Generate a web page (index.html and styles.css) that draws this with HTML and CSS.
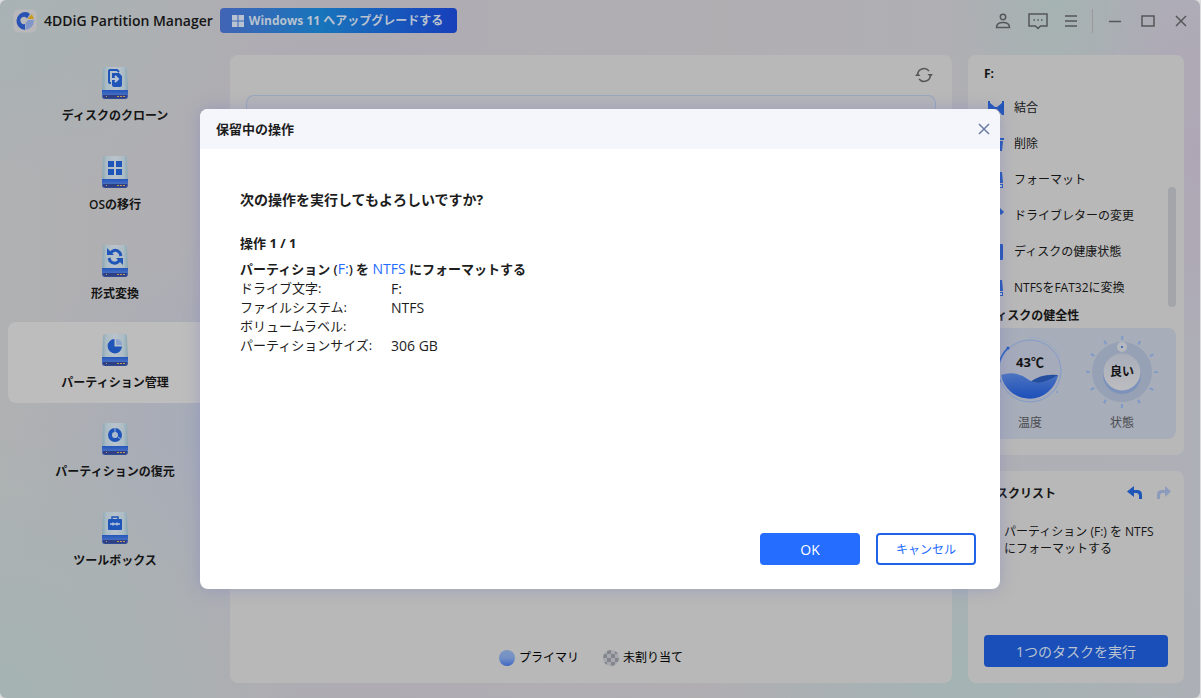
FILE: index.html
```html
<!DOCTYPE html>
<html lang="ja">
<head>
<meta charset="utf-8">
<meta name="viewport" content="width=device-width, initial-scale=1">
<title>4DDiG Partition Manager</title>
<link rel="stylesheet" href="styles.css">
</head>
<body>
<svg class="defs" aria-hidden="true">
  <defs>
    <linearGradient id="case" x1="0" x2="1" y1="0" y2="0">
      <stop offset="0" stop-color="#86a5b3"/><stop offset=".16" stop-color="#abbcc5"/><stop offset=".5" stop-color="#bac3cb"/><stop offset=".84" stop-color="#abbcc5"/><stop offset="1" stop-color="#86a5b3"/>
    </linearGradient>
    <linearGradient id="base" x1="0" x2="0" y1="0" y2="1">
      <stop offset="0" stop-color="#2456bc"/><stop offset=".5" stop-color="#426cc0"/><stop offset="1" stop-color="#2d4690"/>
    </linearGradient>
    <linearGradient id="water" x1="0" x2="0" y1="0" y2="1">
      <stop offset="0" stop-color="#4c74c0"/><stop offset="1" stop-color="#1c4fba"/>
    </linearGradient>
    <linearGradient id="knob" x1="0" x2="0" y1="0" y2="1">
      <stop offset="0" stop-color="#a8adb9"/><stop offset="1" stop-color="#bcbdc0"/>
    </linearGradient>
    <linearGradient id="dot" x1="0" x2="0" y1="0" y2="1">
      <stop offset="0" stop-color="#7e97c4"/><stop offset=".5" stop-color="#7390c5"/><stop offset="1" stop-color="#3f67c2"/>
    </linearGradient>
    <pattern id="checks" width="8" height="8" patternUnits="userSpaceOnUse">
      <path fill="#a7a9af" d="M0 0h8v8H0z"/><path fill="#84868d" d="M4 0h4v4H4zM0 4h4v4H0z"/>
    </pattern>
    <symbol id="drive" viewBox="0 0 26 34">
      <path fill="url(#case)" d="M3 1h20q2 0 2 3l1 22H0L1 4q0-3 2-3z"/>
      <path fill="url(#base)" d="M0 24h26v6q0 3-3 3H3q-3 0-3-3z"/>
      <path fill="#2e3f83" d="M1 29h24v1q0 2-2 2H3q-2 0-2-2z"/>
      <path fill="#c29a5c" d="M4 30h1v1H4zM15 30h2v1h-2zM18 30h2v1h-2zM21 30h2v1h-2z"/>
    </symbol>
  </defs>
</svg>
<div class="window">
  <header class="titlebar">
    <svg class="logo" viewBox="0 0 24 24" aria-hidden="true">
      <rect x=".5" y=".5" width="23" height="23" rx="5" fill="#b9b9bb"/>
      <path fill="#2853b4" d="M13 3a9 9 0 1 0-1 18v-6a3.600 3.600 0 1 1 2-5.500L17 5Q15 3 13 3z"/>
      <path fill="#8296c9" d="M12.500 21v-7L15 11h6q0 8-8.500 10z"/>
      <path fill="#c79a25" d="M15 9l4-4 2 5h-6z"/>
    </svg>
    <h1 class="app-name">4DDiG Partition Manager</h1>
    <button class="upgrade" type="button">
      <svg width="12" height="12" viewBox="0 0 12 12" aria-hidden="true"><path fill="#b8c2d0" d="M0 0h5.500v5.500H0zM6.500 0H12v5.500H6.500zM0 6.500h5.500V12H0zM6.500 6.500H12V12H6.500z"/></svg>
      Windows 11 へアップグレードする
    </button>
    <nav class="tools" aria-label="ウィンドウ">
      <button type="button" aria-label="アカウント"><svg width="16" height="16" viewBox="0 0 16 16"><circle cx="8" cy="4" r="2.700"/><path d="M1.500 14.500q0-5 6.500-5t6.500 5z"/></svg></button>
      <button type="button" aria-label="フィードバック"><svg width="20" height="18" viewBox="0 0 20 18"><path d="M1 2h18v12h-6.500L10 16.500 7.500 14H1zM5.500 8h1.500M9.300 8h1.500M13 8h1.500"/></svg></button>
      <button type="button" aria-label="メニュー"><svg width="14" height="14" viewBox="0 0 14 14"><path d="M1 2h12M1 7h12M1 12h12"/></svg></button>
      <span class="divider"></span>
      <button type="button" aria-label="最小化"><svg width="12" height="12" viewBox="0 0 12 12"><path d="M0 6.500h12"/></svg></button>
      <button type="button" aria-label="最大化"><svg width="14" height="12" viewBox="0 0 14 12"><path d="M1 1h12v10H1z"/></svg></button>
      <button type="button" aria-label="閉じる"><svg width="12" height="12" viewBox="0 0 12 12"><path d="M1 1l10 10M11 1L1 11"/></svg></button>
    </nav>
  </header>

  <div class="layout">
    <nav class="sidebar" aria-label="機能">
      <button class="side-item" type="button">
        <svg class="drive" viewBox="0 0 26 34" aria-hidden="true"><use href="#drive"/><path fill="none" stroke="#1f54b9" stroke-width="2" d="M9 17H8q-1 0-1-1V5q0-1 1-1h7l2 2"/><path fill="#1f54b9" d="M10 7h7l3 3v9q0 2-2 2h-6q-2 0-2-2z"/><path fill="none" stroke="#b9c5d5" stroke-width="2" d="M9 13h7M13 10l3 3-3 3"/></svg>
        ディスクのクローン
      </button>
      <button class="side-item" type="button">
        <svg class="drive" viewBox="0 0 26 34" aria-hidden="true"><use href="#drive"/><path fill="#1f54b9" d="M6 6h6v6H6zM14 6h6v6h-6zM6 14h6v6H6zM14 14h6v6h-6z"/></svg>
        OSの移行
      </button>
      <button class="side-item" type="button">
        <svg class="drive" viewBox="0 0 26 34" aria-hidden="true"><use href="#drive"/><path fill="none" stroke="#1f54b9" stroke-width="3" d="M8 10q5-7 10-1l1 3M18 16q-5 6-10 1l-1-3"/><path fill="#1f54b9" d="M5 4v7h7zM21 21v-7h-7z"/></svg>
        形式変換
      </button>
      <button class="side-item active" type="button" aria-current="page">
        <svg class="drive" viewBox="0 0 26 34" aria-hidden="true"><use href="#drive"/><path fill="#1f54b9" d="M12.500 6v7.500h7.500A7.200 7.200 0 1 1 12.500 6z"/><path fill="#8ba4d0" d="M14 6q6 0 6 6h-6z"/></svg>
        パーティション管理
      </button>
      <button class="side-item" type="button">
        <svg class="drive" viewBox="0 0 26 34" aria-hidden="true"><use href="#drive"/><circle cx="13" cy="13" r="5" fill="none" stroke="#1f54b9" stroke-width="4"/><path stroke="#9cb4d6" d="M13 6v4M16 15l4 3M10 13h6M13 10v6"/></svg>
        パーティションの復元
      </button>
      <button class="side-item" type="button">
        <svg class="drive" viewBox="0 0 26 34" aria-hidden="true"><use href="#drive"/><rect x="6" y="8" width="14" height="11" rx="1" fill="#1f54b9"/><path fill="none" stroke="#1f54b9" stroke-width="1.500" d="M10 8V6h6v2"/><path stroke="#b3c3da" stroke-width="1.500" d="M8 13h10M11 11.500v3M15 11.500v3"/></svg>
        ツールボックス
      </button>
    </nav>

    <main class="panel disks">
      <div class="disk-bar">
        <button type="button" class="refresh" aria-label="更新"><svg width="18" height="16" viewBox="0 0 18 16"><path d="M2.500 8A6.500 6.500 0 0 1 14 4M15.500 8A6.500 6.500 0 0 1 4 12"/><path class="solid" d="M0 9h5.500L2.700 6zM12.500 7H18l-2.700 3z"/></svg></button>
      </div>
      <div class="disk-card"></div>
      <div class="legend">
        <span class="key"><svg width="16" height="16" viewBox="0 0 16 16" aria-hidden="true"><circle cx="8" cy="8" r="8" fill="url(#dot)"/></svg>プライマリ</span>
        <span class="key"><svg width="16" height="16" viewBox="0 0 16 16" aria-hidden="true"><circle cx="8" cy="8" r="8" fill="url(#checks)"/></svg>未割り当て</span>
      </div>
    </main>

    <aside class="right">
      <section class="panel volume">
        <h2 class="volume-name">F:</h2>
        <div class="actions">
          <button type="button"><svg viewBox="0 0 16 16" aria-hidden="true"><path d="M0 1h2v2l5 4h2l5-4V1h2v14h-2L9 9H7l-5 6H0z"/></svg>結合</button>
          <button type="button"><svg viewBox="0 0 16 16" aria-hidden="true"><path d="M0 2h16v2H0zM2 5h13l-1 10H3z"/></svg>削除</button>
          <button type="button"><svg viewBox="0 0 16 16" aria-hidden="true"><path d="M2 0h12l1 11H1zM0 12h15v4H0z"/><path class="cut" d="M11 13h3v2h-3z"/></svg>フォーマット</button>
          <button type="button"><svg viewBox="0 0 16 16" aria-hidden="true"><path d="M12 0l4 4-3 3-4-4zM8 4l4 4-7 7H1v-4z"/></svg>ドライブレターの変更</button>
          <button type="button"><svg viewBox="0 0 16 16" aria-hidden="true"><rect width="15" height="16" rx="1"/><path class="cut" d="M6 4h3v3h3v3H9v3H6v-3H3V7h3z"/></svg>ディスクの健康状態</button>
          <button type="button"><svg viewBox="0 0 16 16" aria-hidden="true"><path d="M2 0h12l1 11H1zM0 12h15v4H0z"/><path class="cut" d="M11 13h3v2h-3z"/></svg>NTFSをFAT32に変換</button>
        </div>
        <span class="scroll-thumb"></span>
        <h3 class="small-title">ディスクの健全性</h3>
        <div class="health">
          <figure>
            <div class="gauge">
              <svg viewBox="0 0 72 72" aria-hidden="true">
                <circle cx="36" cy="35" r="31" fill="#a5abbb" stroke="#829cc9"/>
                <path fill="none" stroke="#8da5cf" stroke-opacity=".5" d="M36 1a34 34 0 0 1 30 20"/>
                <path fill="none" stroke="#2459be" stroke-width="1.500" d="M6 46a32 32 0 0 1 8-34"/><circle cx="14" cy="12" r="1.500" fill="#2459be"/>
                <path fill="#244f9f" d="M36 46q12-9 28-7-1 6-8 7-12 2-20 0z"/>
                <path fill="url(#water)" d="M7 39q15-5 28 5 5 4 14 2 7-2 15-7a29 29 0 0 1-57 0z"/>
                <circle cx="63" cy="56" r="1" fill="#829cc9"/>
              </svg>
              <strong class="temp">43℃</strong>
            </div>
            <figcaption>温度</figcaption>
          </figure>
          <figure>
            <div class="gauge">
              <svg viewBox="0 0 72 72" aria-hidden="true">
                <circle cx="36" cy="36" r="34" fill="none" stroke="#7e9ac8" stroke-width="4" stroke-dasharray="2 15.802" stroke-dashoffset="1"/>
                <circle cx="36" cy="36" r="30" fill="#96a1b6"/>
                <circle cx="36" cy="39" r="19" fill="#718cbd" opacity=".7"/>
                <circle cx="36" cy="36" r="18.500" fill="url(#knob)"/>
                <circle cx="36" cy="11" r="5" fill="#b5b8bd"/><circle cx="36" cy="11" r="1" fill="#2459be"/>
              </svg>
              <strong>良い</strong>
            </div>
            <figcaption>状態</figcaption>
          </figure>
        </div>
      </section>

      <section class="panel tasks">
        <div class="task-head">
          <h2 class="small-title">タスクリスト</h2>
          <button type="button" aria-label="元に戻す"><svg width="16" height="14" viewBox="0 0 16 14"><path fill="#1f54b9" d="M0 5.500L7 0v4h3q5 0 5 5v4h-3v-3q0-3-3-3H7v4z"/></svg></button>
          <button type="button" aria-label="やり直す" disabled><svg width="16" height="14" viewBox="0 0 16 14"><path fill="#8d9bbb" d="M15 5.500L9 0v4H6Q1 4 1 9v4h3v-3q0-3 3-3h2v4z"/></svg></button>
        </div>
        <p class="task">パーティション (F:) を NTFS にフォーマットする</p>
        <button type="button" class="run">1つのタスクを実行</button>
      </section>
    </aside>
  </div>

  <div class="overlay">
    <section class="dialog" role="dialog" aria-modal="true" aria-labelledby="dialog-title">
      <header class="dialog-head">
        <h2 id="dialog-title">保留中の操作</h2>
        <button type="button" aria-label="閉じる"><svg width="12" height="12" viewBox="0 0 12 12"><path d="M1 1l10 10M11 1L1 11"/></svg></button>
      </header>
      <div class="dialog-body">
        <h3 class="question">次の操作を実行してもよろしいですか?</h3>
        <h3 class="count">操作 1 / 1</h3>
        <p class="operation">パーティション (<span>F:</span>) を <span>NTFS</span> にフォーマットする</p>
        <dl class="details">
          <dt>ドライブ文字:</dt><dd>F:</dd>
          <dt>ファイルシステム:</dt><dd>NTFS</dd>
          <dt>ボリュームラベル:</dt><dd></dd>
          <dt>パーティションサイズ:</dt><dd>306 GB</dd>
        </dl>
      </div>
      <footer class="dialog-foot">
        <button type="button" class="ok">OK</button>
        <button type="button" class="cancel">キャンセル</button>
      </footer>
    </section>
  </div>
</div>
</body>
</html>
```

FILE: styles.css
```css
* { box-sizing: border-box; }

body {
  margin: 0;
  padding-right: 1px;
  background: #dcdcde;
  color: #151515;
  font: 12px/18px "Open Sans", "Noto Sans CJK JP", sans-serif;
}

h1, h2, h3, p, dl, dd, figure { margin: 0; }

button {
  margin: 0;
  padding: 0;
  border: 0;
  background: none;
  color: inherit;
  font: inherit;
}

svg { display: block; flex: none; }

.defs { position: absolute; width: 0; height: 0; }

.window {
  position: relative;
  display: flex;
  flex-direction: column;
  min-height: 100vh;
  overflow: hidden;
  border-radius: 6px;
  background:
    radial-gradient(ellipse 110px 180px at 88% 0, #a5b2b2, transparent),
    radial-gradient(ellipse 180px 260px at 100% 22%, #afa6b5, transparent),
    radial-gradient(ellipse 260px 200px at 0 0, #a8b2b4, transparent),
    radial-gradient(ellipse 300px 300px at 0 100%, #a5b3b3, transparent),
    radial-gradient(ellipse 260px 200px at 80% 96%, #a3b3b4, transparent),
    radial-gradient(ellipse 200px 200px at 18% 62%, #a6acb9, transparent),
    linear-gradient(90deg, #b0b1b2, #aeabb3 30%, #b1aeb2 60%, #adb0b6);
}

.titlebar {
  display: flex;
  align-items: center;
  height: 43px;
  padding: 0 13px 2px 13px;
}

.logo { width: 24px; height: 24px; }

.app-name {
  margin-left: 7px;
  font-size: 14px;
  font-weight: 600;
  line-height: 20px;
  white-space: nowrap;
}

.upgrade {
  display: flex;
  align-items: center;
  gap: 5px;
  height: 25px;
  margin-left: 7px;
  padding: 0 14px 0 12px;
  border-radius: 4px;
  background: linear-gradient(90deg, #4264b5, #1875bb 42%, #173fbb);
  color: #b8c2d0;
  font-size: 12px;
  font-weight: 700;
  white-space: nowrap;
}

.tools {
  display: flex;
  align-items: center;
  gap: 20px;
  margin-left: auto;
}

.tools button { display: grid; place-items: center; }
.tools svg, .refresh svg { fill: none; stroke: #555759; stroke-width: 1.5; }
.tools button:nth-child(1) { margin-right: -3px; }
.tools button:nth-child(2) { margin-right: -4px; }
.tools .divider { width: 1px; height: 24px; margin: 0 -4px 0 -6px; background: #999a9b; }

.layout {
  flex: 1;
  display: grid;
  grid-template-columns: 214px minmax(0, 1fr) 216px;
  gap: 16px;
  padding: 12px 16px 15px 0;
}

.panel { border-radius: 8px; background: #b8b8b8; }

.sidebar {
  display: flex;
  flex-direction: column;
  gap: 8px;
  padding-left: 8px;
}

.side-item {
  display: flex;
  flex-direction: column;
  align-items: center;
  gap: 7px;
  height: 81px;
  margin-right: -8px;
  padding-top: 11px;
  border-radius: 8px;
  font-weight: 600;
}

.side-item.active { background: #bdbdbd; }
.drive { width: 26px; height: 34px; }

.disks { display: flex; flex-direction: column; padding: 0 16px 16px; }
.disk-bar { display: flex; justify-content: flex-end; align-items: center; height: 40px; padding-right: 3px; }
.refresh .solid { fill: #555759; stroke: none; }

.disk-card {
  flex: 1;
  margin-bottom: 60px;
  border: 1px solid #98a6be;
  border-bottom: 0;
  border-radius: 8px 8px 0 0;
  background: #b4b5b8;
}

.legend { display: flex; justify-content: center; gap: 24px; color: #000; }
.key { display: flex; align-items: center; gap: 4px; }

.right {
  display: grid;
  grid-template-rows: 400px 1fr;
  gap: 16px;
}

.volume { position: relative; padding: 9px 8px 16px 16px; }
.volume-name { font-size: 12px; line-height: 20px; }
.actions { padding: 6px 0 0 4px; }

.actions button {
  display: flex;
  align-items: center;
  gap: 10px;
  width: 100%;
  height: 36px;
}

.actions svg { width: 16px; height: 16px; fill: #1f54b9; }
.actions .cut { fill: #b8c2d0; }

.scroll-thumb {
  position: absolute;
  top: 132px;
  right: 8px;
  width: 8px;
  height: 120px;
  border-radius: 4px;
  background: #a3a5aa;
}

.small-title { padding-top: 1px; font-size: 12px; line-height: 18px; }

.health {
  display: flex;
  gap: 20px;
  height: 111px;
  margin-top: 3px;
  padding: 8px 0 0 10px;
  border-radius: 8px;
  background: #a7adb9;
}

.gauge { display: grid; place-items: center; width: 72px; height: 72px; }
.gauge > * { grid-area: 1 / 1; }
.gauge svg { width: 72px; height: 72px; }
.gauge .temp { padding-bottom: 20px; font-size: 13px; }
.health figcaption { padding-top: 6px; color: #4b4c50; text-align: center; }

.tasks { display: flex; flex-direction: column; padding: 12px 12px 16px 16px; }
.task-head { display: flex; align-items: center; gap: 13px; height: 20px; }
.task-head .small-title { flex: 1; }
.task-head button { height: 16px; }
.task { padding: 20px 8px 0 20px; line-height: 17px; }

.run {
  height: 32px;
  margin: auto 4px 0 0;
  padding-top: 1px;
  border-radius: 4px;
  background: #1a4fb9;
  color: #b8c2d0;
  font-size: 14px;
}

.overlay {
  position: absolute;
  inset: 0;
  display: grid;
  place-items: center;
}

.dialog {
  display: flex;
  flex-direction: column;
  width: 800px;
  max-width: 100%;
  min-height: 480px;
  overflow: hidden;
  border-radius: 8px;
  background: #fff;
  box-shadow: 0 0 16px rgba(120, 120, 190, .4);
  color: #1d1d1d;
  font-size: 13px;
}

.dialog-head {
  display: flex;
  align-items: center;
  justify-content: space-between;
  height: 40px;
  padding: 0 10px 0 16px;
  background: #f4f6fb;
}

.dialog-head h2 { font-size: 13px; line-height: 20px; }
.dialog-head svg { fill: none; stroke: #6c7ca6; stroke-width: 1.5; }
.dialog-body { flex: 1; padding: 41px 40px; }
.question { margin-bottom: 23px; font-size: 14px; line-height: 20px; }
.count { font-size: 13px; line-height: 20px; }
.operation { margin-top: 6px; font-weight: 600; line-height: 19px; }
.operation span { color: #246bff; font-size: 14px; font-weight: 400; }

.details {
  display: grid;
  grid-template-columns: 151px 1fr;
  grid-auto-rows: 19px;
  line-height: 19px;
}

.details dd { font-size: 14px; }

.dialog-foot { display: flex; justify-content: flex-end; gap: 16px; padding: 0 24px 24px; }
.dialog-foot button { width: 100px; height: 32px; padding-top: 1px; border-radius: 4px; }
.ok { background: #246dff; color: #fff; font-size: 14px; }
.dialog-foot .cancel { border: 2px solid #2163e8; color: #246bff; font-size: 12px; }
```
